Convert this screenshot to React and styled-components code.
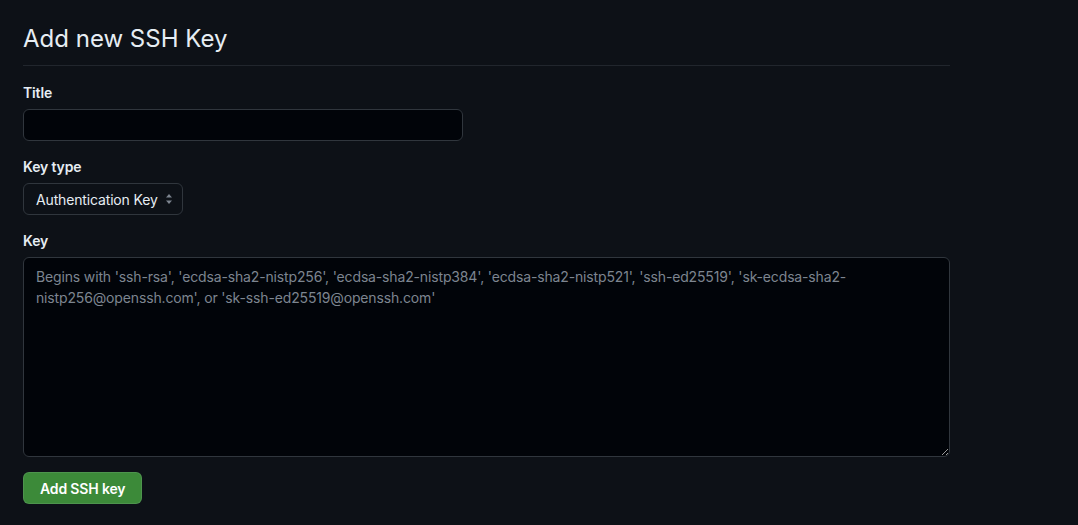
import React from 'react';
import styled, { createGlobalStyle } from 'styled-components';

const Global = createGlobalStyle`
	html, body {
		margin: 0;
		background: #0d1117;
	}
	body {
		font-family: Inter, "Noto Sans", "Liberation Sans", sans-serif;
		color: #e6edf3;
		font-size: 14px;
	}
`;

const Page = styled.div`
	padding: 21px 0 0 23px;
	width: 950px;
	min-height: 525px;
	box-sizing: border-box;
	letter-spacing: -0.15px;
`;

const Heading = styled.h2`
	margin: 0 0 16px;
	padding-bottom: 8px;
	font-size: 24px;
	font-weight: 400;
	line-height: 36px;
	letter-spacing: 0;
	border-bottom: 1px solid #21262d;
`;

const Group = styled.div`
	margin-bottom: 15px;
`;

const Label = styled.label`
	display: block;
	font-weight: 600;
	font-size: 14px;
	line-height: 21px;
	margin-bottom: 6px;
`;

const Input = styled.input`
	display: block;
	box-sizing: border-box;
	width: ${p => p.$width || '100%'};
	height: 32px;
	padding: 5px 12px;
	background: #010409;
	border: 1px solid #30363d;
	border-radius: 6px;
	color: #e6edf3;
	font: inherit;
	outline: none;
`;

const SelectBox = styled.div`
	display: inline-flex;
	align-items: center;
	gap: 6px;
	box-sizing: border-box;
	height: 32px;
	width: 160px;
	padding: 0 9px 0 12px;
	background: #0d1117;
	border: 1px solid #30363d;
	border-radius: 6px;
	font-size: 14px;
	color: #e6edf3;
	white-space: nowrap;
`;

const SelectText = styled.span`
	flex: 1;
`;

const TextArea = styled.textarea`
	display: block;
	box-sizing: border-box;
	width: 100%;
	height: 200px;
	padding: 8px 12px;
	background: #010409;
	border: 1px solid #30363d;
	border-radius: 6px;
	color: #e6edf3;
	font: inherit;
	font-size: 14px;
	line-height: 21px;
	letter-spacing: -0.15px;
	outline: none;
	resize: vertical;

	&::placeholder {
		color: #7d8590;
	}
`;

const Button = styled.button`
	height: 32px;
	padding: 0 16px;
	background: #3c8a39;
	border: 1px solid rgba(240, 246, 252, 0.1);
	border-radius: 6px;
	color: #ffffff;
	font: inherit;
	font-weight: 600;
	font-size: 14px;
	letter-spacing: -0.15px;
`;

const Arrows = () => (
	<svg width="8" height="12" viewBox="0 0 8 12">
		<path d="M4 1 L7 4.5 H1 Z" fill="#7d8590" />
		<path d="M4 11 L7 7.5 H1 Z" fill="#7d8590" />
	</svg>
);

const placeholder = "Begins with 'ssh-rsa', 'ecdsa-sha2-nistp256', 'ecdsa-sha2-nistp384', 'ecdsa-sha2-nistp521', 'ssh-ed25519', 'sk-ecdsa-sha2-nistp256@openssh.com', or 'sk-ssh-ed25519@openssh.com'";

export default function App() {
	return (
		<>
			<Global />
			<Page>
				<Heading>Add new SSH Key</Heading>
				<Group>
					<Label htmlFor="title">Title</Label>
					<Input id="title" $width="440px" />
				</Group>
				<Group>
					<Label>Key type</Label>
					<SelectBox>
						<SelectText>Authentication Key</SelectText>
						<Arrows />
					</SelectBox>
				</Group>
				<Group>
					<Label htmlFor="key">Key</Label>
					<TextArea id="key" placeholder={placeholder} />
				</Group>
				<Button>Add SSH key</Button>
			</Page>
		</>
	);
}
